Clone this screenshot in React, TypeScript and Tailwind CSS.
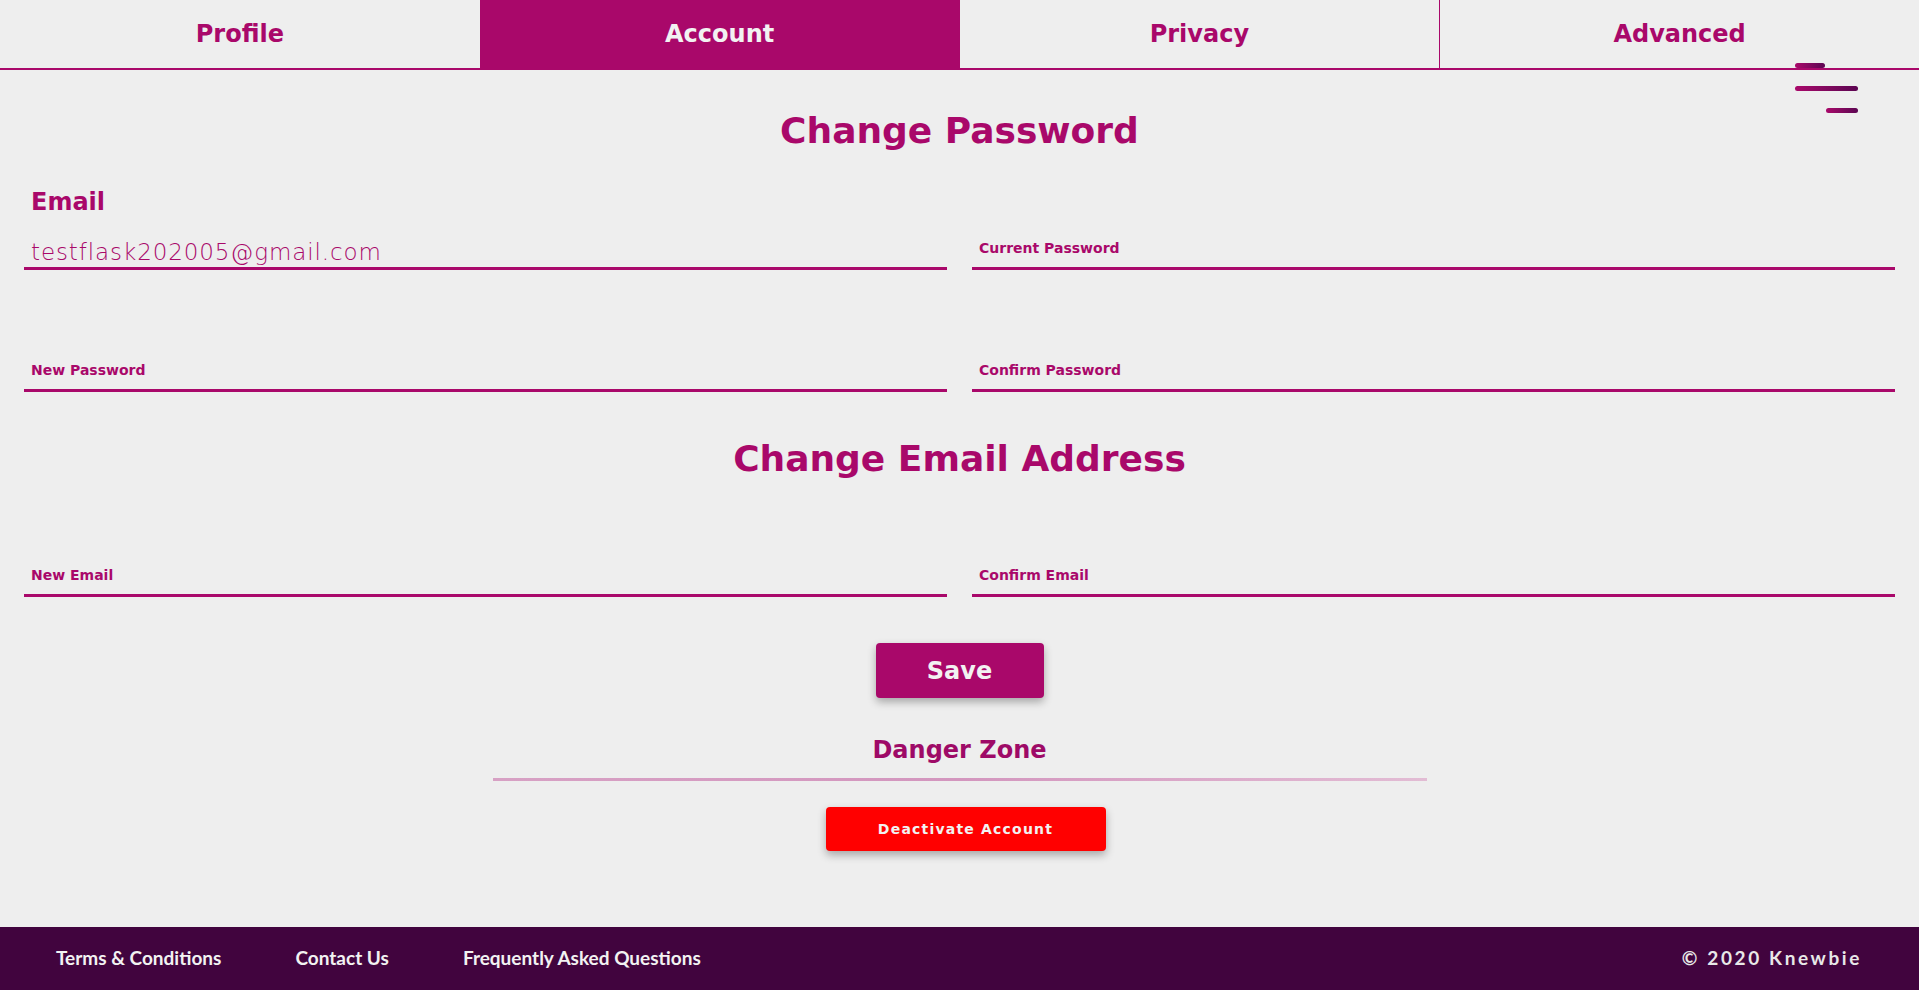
import React from "react";

const MAG = "text-[#a9086a]";

function Field({ label, value }: { label?: string; value?: string }) {
  return (
    <div className="border-b-[3px] border-[#a9086a]">
      {value ? (
        <div className={`pl-[7px] pb-[3px] text-[23px] leading-none font-extralight tracking-[0.9px] ${MAG}`}>{value}</div>
      ) : (
        <div className={`pl-[7px] pb-[12px] text-[14px] leading-none font-bold ${MAG}`}>{label}</div>
      )}
    </div>
  );
}

export default function App() {
  const tabs = ["Profile", "Account", "Privacy", "Advanced"];
  return (
    <div className="relative min-h-screen flex flex-col bg-[#eeeeee] font-['DejaVu_Sans',sans-serif]">
      <nav className="grid grid-cols-4 h-[70px] border-b-2 border-[#a9086a]">
        {tabs.map((t, i) => (
          <div
            key={t}
            className={
              "flex items-center justify-center text-[24px] font-bold " +
              (i === 1 ? "bg-[#a9086a] text-[#f2f2f2]" : "text-[#a9086a]") +
              (i === 3 ? " border-l border-[#a9086a]" : "")
            }
          >
            {t}
          </div>
        ))}
      </nav>

      <div className="absolute top-[63px] right-[61px] w-[63px] h-[50px] flex flex-col justify-between">
        <div className="w-[30px] h-[5px] rounded-full bg-gradient-to-r from-[#a9086a] to-[#5c0552]" />
        <div className="w-[63px] h-[5px] rounded-full bg-gradient-to-r from-[#a9086a] to-[#5c0552]" />
        <div className="ml-[31px] w-[32px] h-[5px] rounded-full bg-gradient-to-r from-[#a9086a] to-[#5c0552]" />
      </div>

      <main className="flex-1 px-[24px]">
        <h1 className={`mt-[43px] text-center text-[36px] leading-none font-bold ${MAG}`}>
          Change Password
        </h1>

        <div className="mt-[41px] grid grid-cols-2 gap-x-[25px] items-end">
          <div>
            <div className={`pl-[7px] text-[24px] leading-none font-bold ${MAG}`}>Email</div>
            <div className="mt-[27px]">
              <Field value="testflask202005@gmail.com" />
            </div>
          </div>
          <Field label="Current Password" />
        </div>

        <div className="mt-[93px] grid grid-cols-2 gap-x-[25px] items-end">
          <Field label="New Password" />
          <Field label="Confirm Password" />
        </div>

        <h2 className={`mt-[49px] text-center text-[36px] leading-none font-bold ${MAG}`}>
          Change Email Address
        </h2>

        <div className="mt-[91px] grid grid-cols-2 gap-x-[25px] items-end">
          <Field label="New Email" />
          <Field label="Confirm Email" />
        </div>

        <div className="mt-[46px] flex justify-center">
          <button className="w-[168px] h-[55px] rounded-[4px] bg-[#a9086a] text-[#f2f2f2] text-[24px] font-bold shadow-[0_4px_8px_rgba(0,0,0,0.3)]">
            Save
          </button>
        </div>

        <div className="mt-[40px] text-center text-[24px] leading-none font-bold text-[#9e0a67]">Danger Zone</div>
        <div className="mt-[16px] mx-auto w-[934px] h-[3px] bg-gradient-to-r from-[#d7a1c4] via-[#d396be] to-[#e2bcd4]" />

        <div className="mt-[26px] flex justify-center pl-[12px]">
          <button className="w-[280px] h-[44px] rounded-[4px] bg-[#ff0000] text-[#f2f2f2] text-[14px] font-bold tracking-[1.2px] shadow-[0_4px_8px_rgba(0,0,0,0.3)]">
            Deactivate Account
          </button>
        </div>
      </main>

      <footer className="h-[63px] bg-[#41043e] flex items-center justify-between pl-[56px] pr-[57px] font-['Lato',sans-serif] font-bold text-[19px] text-[#f2f2f2]">
        <div className="flex items-center gap-[74px]">
          <span>Terms &amp; Conditions</span>
          <span>Contact Us</span>
          <span>Frequently Asked Questions</span>
        </div>
        <span className="tracking-[2.6px] text-[#e8e8e8]">© 2020 Knewbie</span>
      </footer>
    </div>
  );
}
